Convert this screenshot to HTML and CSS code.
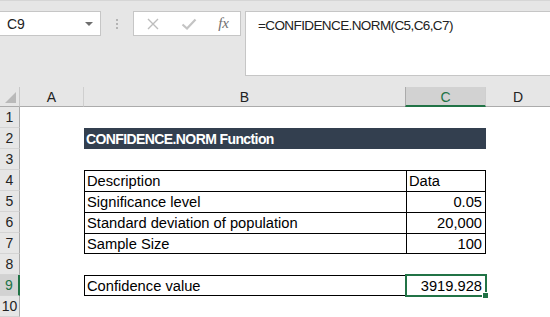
FILE: index.html
```html
<!DOCTYPE html>
<html lang="en">
<head>
    <meta charset="UTF-8">
    <title>CONFIDENCE.NORM</title>
    <link rel="stylesheet" href="styles.css">
</head>
<body>

    <!-- barra de formula -->
    <div class="toolbar">
        <div class="name-box">
            <span>C9</span>
            <span class="caret"></span>
        </div>
        <div class="grip">
            <span></span><span></span><span></span>
        </div>
        <div class="fx-box">
            <svg width="14" height="14" viewBox="0 0 14 14"><path d="M2 2 L12 12 M12 2 L2 12" stroke="#bdbdbd" stroke-width="1.4" fill="none"/></svg>
            <svg width="16" height="14" viewBox="0 0 16 14"><path d="M1.5 7.5 L6 11.5 L14.5 2.5" stroke="#c4c4c4" stroke-width="2.2" fill="none"/></svg>
            <span class="fx">fx</span>
        </div>
        <div class="formula">=CONFIDENCE.NORM(C5,C6,C7)</div>
    </div>

    <!-- planilha -->
    <div class="sheet">
        <div class="corner"><span class="tri"></span></div>
        <div class="col-head">A</div>
        <div class="col-head">B</div>
        <div class="col-head selected">C</div>
        <div class="col-head last">D</div>

        <div class="row-head">1</div>
        <div class="cell"></div><div class="cell"></div><div class="cell"></div><div class="cell"></div>

        <div class="row-head">2</div>
        <div class="cell"></div>
        <div class="cell title">CONFIDENCE.NORM Function</div>
        <div class="cell"></div>

        <div class="row-head">3</div>
        <div class="cell"></div><div class="cell"></div><div class="cell"></div><div class="cell"></div>

        <div class="row-head">4</div>
        <div class="cell"></div>
        <div class="cell box">Description</div>
        <div class="cell box right">Data</div>
        <div class="cell"></div>

        <div class="row-head">5</div>
        <div class="cell"></div>
        <div class="cell box">Significance level</div>
        <div class="cell box right num">0.05</div>
        <div class="cell"></div>

        <div class="row-head">6</div>
        <div class="cell"></div>
        <div class="cell box">Standard deviation of population</div>
        <div class="cell box right num">20,000</div>
        <div class="cell"></div>

        <div class="row-head">7</div>
        <div class="cell"></div>
        <div class="cell box bottom">Sample Size</div>
        <div class="cell box right bottom num">100</div>
        <div class="cell"></div>

        <div class="row-head">8</div>
        <div class="cell"></div><div class="cell"></div><div class="cell"></div><div class="cell"></div>

        <div class="row-head selected">9</div>
        <div class="cell"></div>
        <div class="cell box bottom">Confidence value</div>
        <div class="cell box right bottom num active">3919.928<span class="handle"></span></div>
        <div class="cell"></div>

        <div class="row-head">10</div>
        <div class="cell"></div><div class="cell"></div><div class="cell"></div><div class="cell"></div>
    </div>

</body>
</html>
```

FILE: styles.css
```css
body {
    margin: 0;
    width: 550px;
    height: 317px;
    overflow: hidden;
    background: white;
    font-family: 'Liberation Sans', Arial, sans-serif;
}

/* barra de cima */
.toolbar {
    height: 87px;
    box-sizing: border-box;
    background: #e6e6e6;
    border-top: 1px solid #d6d6d6;
    padding-top: 10px;
    display: flex;
    align-items: flex-start;
}

.name-box {
    width: 101px;
    height: 25px;
    box-sizing: border-box;
    background: white;
    border: 1px solid #c6c6c6;
    border-left: none;
    display: flex;
    align-items: center;
    justify-content: space-between;
    padding: 0 7px 0 7px;
    font-size: 14px;
    color: #222;
}

.caret {
    width: 0;
    height: 0;
    border-left: 4px solid transparent;
    border-right: 4px solid transparent;
    border-top: 4px solid #6e6e6e;
}

.grip {
    width: 32px;
    height: 25px;
    display: flex;
    flex-direction: column;
    align-items: center;
    justify-content: center;
    gap: 2px;
}

.grip span {
    width: 2px;
    height: 2px;
    background: #b4b4b4;
}

.fx-box {
    width: 108px;
    height: 25px;
    box-sizing: border-box;
    background: white;
    border: 1px solid #c6c6c6;
    display: flex;
    align-items: center;
    justify-content: space-between;
    padding: 0 11px 0 12px;
}

.fx {
    font-family: 'Liberation Serif', serif;
    font-style: italic;
    font-size: 15px;
    color: #707070;
}

.formula {
    flex: 1;
    margin-left: 4px;
    height: 65px;
    box-sizing: border-box;
    background: white;
    border: 1px solid #c6c6c6;
    border-right: none;
    padding: 6px 0 0 12px;
    font-size: 13.5px;
    letter-spacing: -0.6px;
    color: #222;
}

/* grade da planilha */
.sheet {
    display: grid;
    grid-template-columns: 20px 64px 322px 80px 64px;
    grid-template-rows: 20px repeat(10, 21px);
}

.corner {
    background: #e6e6e6;
    border-right: 1px solid #c8c8c8;
    border-bottom: 1px solid #ababab;
    box-sizing: border-box;
    position: relative;
}

.tri {
    position: absolute;
    right: 3px;
    bottom: 3px;
    width: 0;
    height: 0;
    border-left: 11px solid transparent;
    border-bottom: 11px solid #b9b9b9;
}

.col-head {
    background: #e6e6e6;
    border-right: 1px solid #cfcfcf;
    border-bottom: 1px solid #ababab;
    box-sizing: border-box;
    font-size: 14px;
    color: #222;
    display: flex;
    align-items: center;
    justify-content: center;
    padding-top: 1px;
}

.col-head.selected {
    background: #d2d2d2;
    color: #217346;
    border-left: 1px solid #ababab;
    border-bottom: 2px solid #217346;
    margin-left: -1px;
}

.col-head.last {
    border-right: none;
}

.row-head {
    background: #e6e6e6;
    border-right: 1px solid #ababab;
    border-bottom: 1px solid #d4d4d4;
    box-sizing: border-box;
    font-size: 14px;
    color: #222;
    display: flex;
    align-items: center;
    justify-content: center;
}

.row-head.selected {
    background: #d2d2d2;
    color: #217346;
    border-right: 2px solid #217346;
}

.cell {
    box-sizing: border-box;
    font-size: 14.7px;
    color: black;
    display: flex;
    align-items: center;
    padding: 0 3px 0 2px;
    white-space: nowrap;
    position: relative;
}

.title {
    grid-column: span 2;
    background: #333f4f;
    color: white;
    font-weight: bold;
    font-size: 14px;
    letter-spacing: -0.6px;
}

.box {
    border-left: 1px solid black;
    border-top: 1px solid black;
}

.box.right {
    border-right: 1px solid black;
}

.box.bottom {
    border-bottom: 1px solid black;
}

.num {
    justify-content: flex-end;
}

.active {
    outline: 2px solid #217346;
    outline-offset: -1px;
    z-index: 1;
}

.handle {
    position: absolute;
    right: -4px;
    bottom: -4px;
    width: 5px;
    height: 5px;
    background: #217346;
    border: 1px solid white;
}
```
